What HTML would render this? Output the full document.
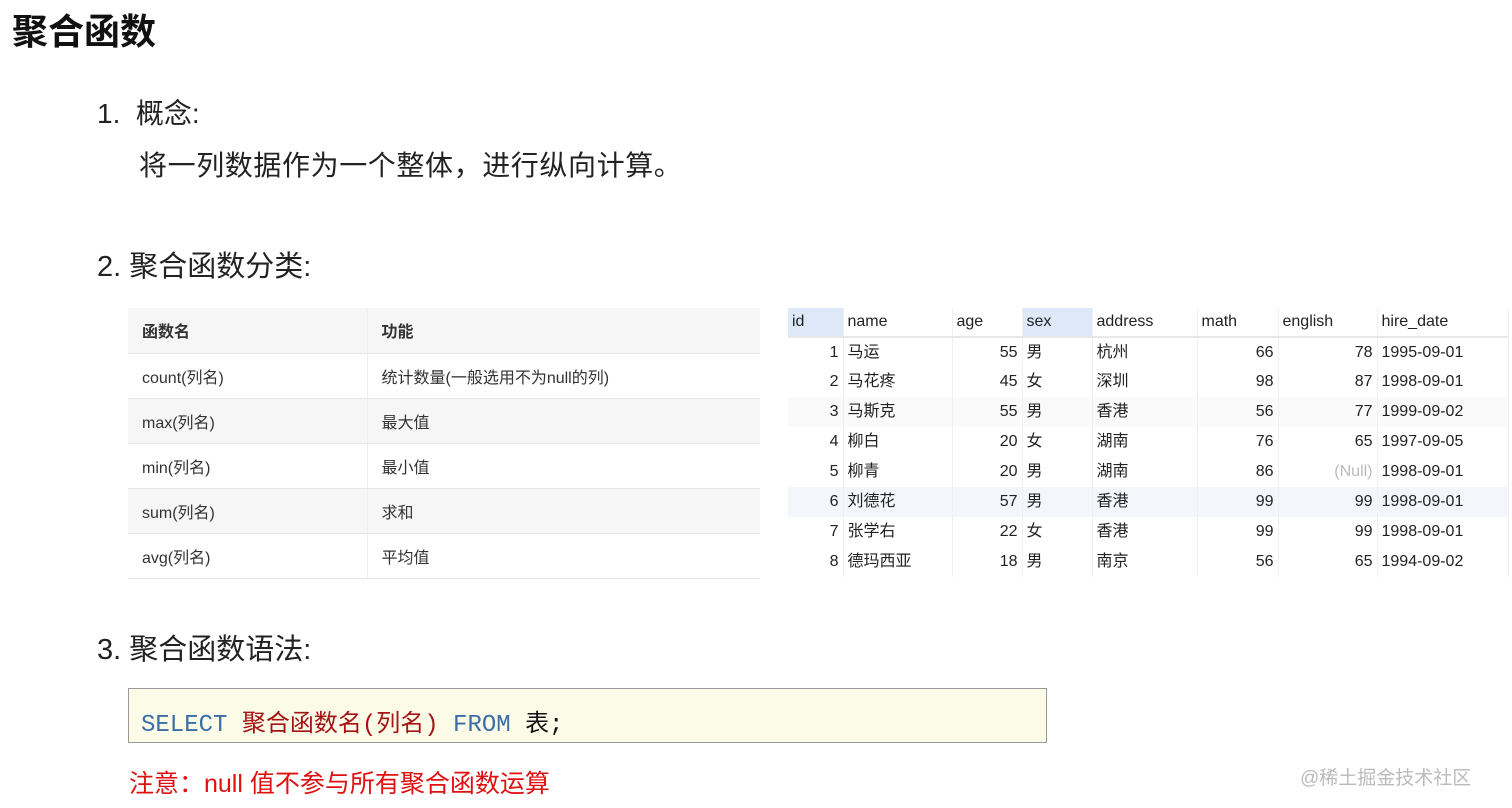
<!DOCTYPE html>
<html><head><meta charset="utf-8"><style>
body{margin:0;width:1512px;height:808px;background:#fff;position:relative;overflow:hidden;font-family:"Liberation Sans","Noto Sans CJK SC",sans-serif;color:#222}
.a{position:absolute;white-space:nowrap}
.lt{position:absolute;left:128px;top:308px;width:632px;border-collapse:collapse;font-size:16px;color:#333}
.lt td{height:45px;padding:0 0 0 14px;border-bottom:1px solid #e6e6e6;box-sizing:border-box}
.lt td:first-child{width:239px;border-right:1px solid #eee}
.lt tr:nth-child(odd){background:#f6f6f6}
.lt tr:nth-child(even){background:#fff}
.rt{position:absolute;left:788px;top:308px;border-collapse:collapse;font-size:16px;color:#222}
.rt td{height:30px;padding:0 4px;box-sizing:border-box;border-right:1px solid #f0f0f0;vertical-align:middle;line-height:20px}
.rt td span{display:inline-block;vertical-align:middle}
.rt tr.h td{height:29px;border-bottom:2px solid #e8e8e8}
.rt .r{text-align:right}
</style></head><body>
<div class="a" style="left:12px;top:3px;font-size:36px;font-weight:bold;color:#111">聚合函数</div>
<div class="a" style="left:97px;top:92px;font-size:28px">1.&nbsp; 概念:</div>
<div class="a" style="left:139px;top:144px;font-size:28px;letter-spacing:0.6px">将一列数据作为一个整体，进行纵向计算。</div>
<div class="a" style="left:97px;top:243px;font-size:29px">2. 聚合函数分类:</div>
<table class="lt">
<tr><td><b>函数名</b></td><td><b>功能</b></td></tr>
<tr><td>count(列名)</td><td>统计数量(一般选用不为null的列)</td></tr>
<tr><td>max(列名)</td><td>最大值</td></tr>
<tr><td>min(列名)</td><td>最小值</td></tr>
<tr><td>sum(列名)</td><td>求和</td></tr>
<tr><td>avg(列名)</td><td>平均值</td></tr>
</table>
<table class="rt">
<tr class="h"><td style="width:55px;background:#dde9f8">id</td><td style="width:109px">name</td><td style="width:70px">age</td><td style="width:70px;background:#dde9f8">sex</td><td style="width:105px">address</td><td style="width:81px">math</td><td style="width:99px">english</td><td style="width:131px">hire_date</td></tr>
<tr><td class="r">1</td><td>马运</td><td class="r">55</td><td>男</td><td>杭州</td><td class="r">66</td><td class="r">78</td><td>1995-09-01</td></tr>
<tr><td class="r">2</td><td>马花疼</td><td class="r">45</td><td>女</td><td>深圳</td><td class="r">98</td><td class="r">87</td><td>1998-09-01</td></tr>
<tr style="background:#fafafa"><td class="r">3</td><td>马斯克</td><td class="r">55</td><td>男</td><td>香港</td><td class="r">56</td><td class="r">77</td><td>1999-09-02</td></tr>
<tr><td class="r">4</td><td>柳白</td><td class="r">20</td><td>女</td><td>湖南</td><td class="r">76</td><td class="r">65</td><td>1997-09-05</td></tr>
<tr><td class="r">5</td><td>柳青</td><td class="r">20</td><td>男</td><td>湖南</td><td class="r">86</td><td class="r" style="color:#bbb">(Null)</td><td>1998-09-01</td></tr>
<tr style="background:#f3f7fc"><td class="r">6</td><td>刘德花</td><td class="r">57</td><td>男</td><td>香港</td><td class="r">99</td><td class="r">99</td><td>1998-09-01</td></tr>
<tr><td class="r">7</td><td>张学右</td><td class="r">22</td><td>女</td><td>香港</td><td class="r">99</td><td class="r">99</td><td>1998-09-01</td></tr>
<tr><td class="r">8</td><td>德玛西亚</td><td class="r">18</td><td>男</td><td>南京</td><td class="r">56</td><td class="r">65</td><td>1994-09-02</td></tr>
</table>
<div class="a" style="left:97px;top:626px;font-size:29px">3. 聚合函数语法:</div>
<div class="a" style="left:128px;top:688px;width:917px;height:53px;background:#fbfbe8;border:1px solid #999"></div>
<div class="a" style="left:141px;top:703px;font-size:24px;font-family:'Liberation Mono','Noto Sans CJK SC',monospace"><span style="color:#3a6ea5">SELECT</span> <span style="color:#a31515">聚合函数名(列名)</span> <span style="color:#3a6ea5">FROM</span> <span style="color:#111">表;</span></div>
<div class="a" style="left:129px;top:764px;font-size:25px;color:#e01010">注意：null 值不参与所有聚合函数运算</div>
<div class="a" style="left:1300px;top:763px;font-size:19px;color:#bbb">@稀土掘金技术社区</div>
</body></html>
